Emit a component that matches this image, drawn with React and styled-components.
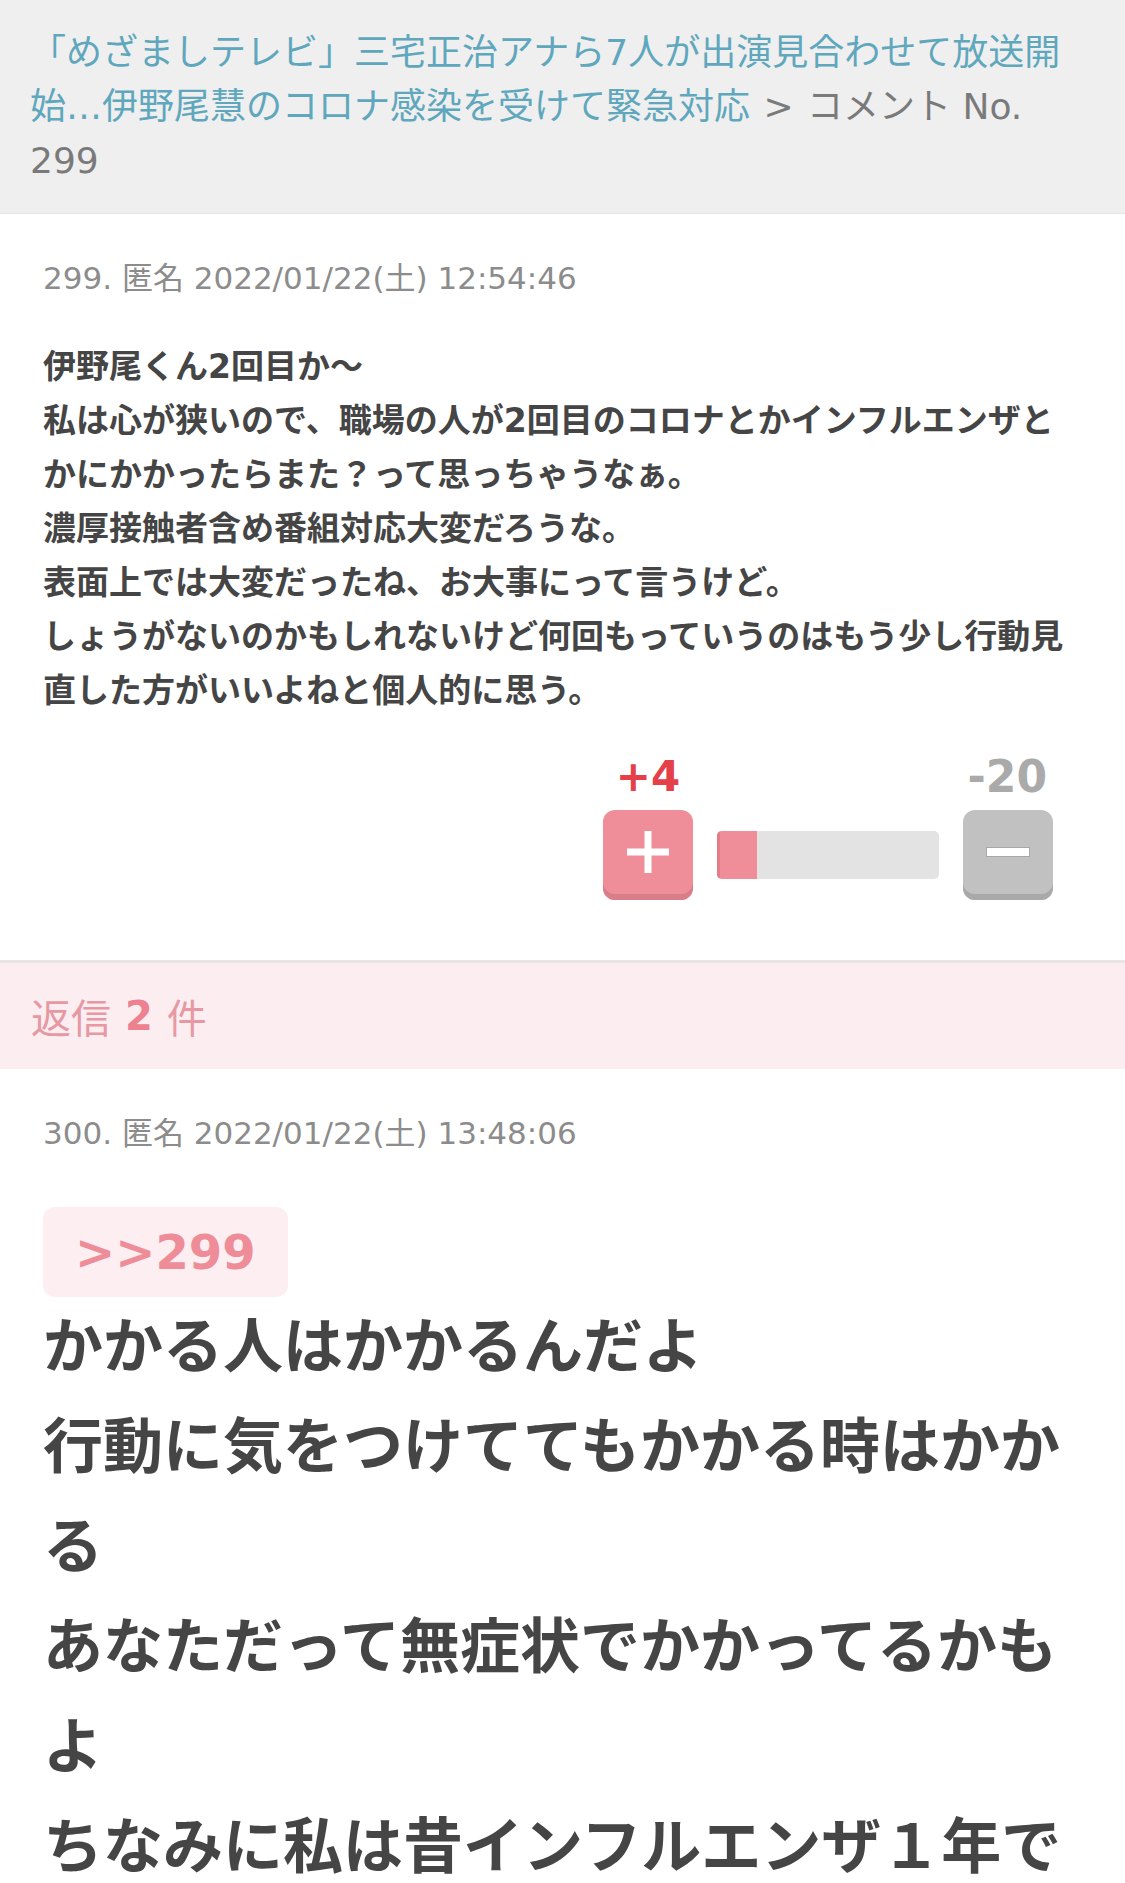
import React from 'react'
import styled, { createGlobalStyle } from 'styled-components'

const GlobalStyle = createGlobalStyle`
  body {
    margin: 0;
    background: #fff;
    font-family: "DejaVu Sans", "Noto Sans CJK JP", sans-serif;
  }
`

const Page = styled.div`
  width: 1125px;
`

const Breadcrumb = styled.div`
  background: #efefef;
  border-bottom: 1px solid #e3e3e3;
  padding: 26px 40px 25px 30px;
  font-size: 36px;
  line-height: 54px;
  color: #7a7a7a;
`

const CrumbLink = styled.a`
  color: #5fa7bd;
  text-decoration: none;
`

const Sep = styled.span`
  margin: 0 2px;
`

const Comment = styled.div`
  padding: 42px 43px ${(p) => (p.$last ? '0' : '60px')};
`

const Meta = styled.div`
  font-size: 31px;
  line-height: 45px;
  color: #8c8c8c;
`

const Body = styled.div`
  margin-top: 39px;
  font-size: 33px;
  line-height: 54px;
  font-weight: bold;
  color: #454545;
`

const VoteArea = styled.div`
  display: flex;
  justify-content: flex-end;
  padding-right: 29px;
  margin-top: 38px;
`

const VoteGrid = styled.div`
  display: grid;
  grid-template-columns: 90px 222px 90px;
  column-gap: 24px;
  row-gap: 12px;
  align-items: center;
`

const Count = styled.div`
  font-size: ${(p) => (p.$plus ? '42px' : '44px')};
  line-height: 42px;
  font-weight: bold;
  color: ${(p) => (p.$plus ? '#e5404a' : '#aaaaaa')};
  text-align: ${(p) => (p.$plus ? 'center' : 'right')};
  grid-column: ${(p) => (p.$plus ? 1 : 3)};
  margin-right: ${(p) => (p.$plus ? '0' : '6px')};
  white-space: nowrap;
`

const VoteButton = styled.button`
  width: 90px;
  height: 90px;
  padding: 0;
  border: none;
  border-radius: 12px;
  background: ${(p) => (p.$plus ? '#ef8e98' : '#c1c1c1')};
  box-shadow: inset 0 -6px 0 ${(p) => (p.$plus ? '#d97d88' : '#a9a9a9')};
  display: flex;
  align-items: center;
  justify-content: center;
  padding-bottom: 6px;
`

const MinusBar = styled.span`
  display: block;
  width: 42px;
  height: 8px;
  background: #fff;
  box-shadow: 0 0 0 1px #a8a8a8;
`

const Bar = styled.div`
  height: 48px;
  border-radius: 5px;
  background: #e3e3e3;
  overflow: hidden;
  display: flex;
`

const BarFill = styled.div`
  background: #ef8e98;
  border-left: 3px solid #e47b87;
`

const ReplyBand = styled.div`
  background: #fcedf1;
  border-top: 3px solid #ebe4e6;
  height: 109px;
  padding: 0 31px;
  box-sizing: border-box;
  display: flex;
  align-items: center;
  font-size: 40px;
  color: #e799a3;
`

const ReplyCount = styled.b`
  color: #ec8190;
  margin: 0 14px;
`

const Anchor = styled.div`
  display: inline-block;
  margin-top: 51px;
  height: 90px;
  line-height: 90px;
  padding: 0 32px;
  border-radius: 12px;
  background: #fdeef1;
  font-size: 48px;
  font-weight: bold;
  color: #ee8c98;
`

const BigBody = styled.div`
  font-size: 60px;
  line-height: 100px;
  font-weight: bold;
  color: #454545;
`

const PlusIcon = () => (
  <svg width="42" height="42" viewBox="0 0 42 42">
    <rect x="17.5" y="0" width="7" height="42" fill="#fff" />
    <rect x="0" y="17.5" width="42" height="7" fill="#fff" />
  </svg>
)

const firstBody = [
  '伊野尾くん2回目か〜',
  '私は心が狭いので、職場の人が2回目のコロナとかインフルエンザとかにかかったらまた？って思っちゃうなぁ。',
  '濃厚接触者含め番組対応大変だろうな。',
  '表面上では大変だったね、お大事にって言うけど。',
  'しょうがないのかもしれないけど何回もっていうのはもう少し行動見直した方がいいよねと個人的に思う。',
]

const replyBody = [
  'かかる人はかかるんだよ',
  '行動に気をつけててもかかる時はかかる',
  'あなただって無症状でかかってるかもよ',
  'ちなみに私は昔インフルエンザ１年で',
]

export default function App() {
  const plus = 4
  const minus = 20
  const ratio = (plus / (plus + minus)) * 100

  return (
    <Page>
      <GlobalStyle />
      <Breadcrumb>
        <CrumbLink href="#">
          「めざましテレビ」三宅正治アナら7人が出演見合わせて放送開始…伊野尾慧のコロナ感染を受けて緊急対応
        </CrumbLink>
        <Sep> &gt; </Sep>
        コメント No. 299
      </Breadcrumb>

      <Comment>
        <Meta>299. 匿名 2022/01/22(土) 12:54:46</Meta>
        <Body>
          {firstBody.map((line) => (
            <div key={line}>{line}</div>
          ))}
        </Body>
        <VoteArea>
          <VoteGrid>
            <Count $plus>+{plus}</Count>
            <Count>-{minus}</Count>
            <VoteButton $plus>
              <PlusIcon />
            </VoteButton>
            <Bar>
              <BarFill style={{ width: `${ratio}%` }} />
            </Bar>
            <VoteButton>
              <MinusBar />
            </VoteButton>
          </VoteGrid>
        </VoteArea>
      </Comment>

      <ReplyBand>
        返信<ReplyCount>2</ReplyCount>件
      </ReplyBand>

      <Comment $last>
        <Meta>300. 匿名 2022/01/22(土) 13:48:06</Meta>
        <Anchor>&gt;&gt;299</Anchor>
        <BigBody>
          {replyBody.map((line) => (
            <div key={line}>{line}</div>
          ))}
        </BigBody>
      </Comment>
    </Page>
  )
}
